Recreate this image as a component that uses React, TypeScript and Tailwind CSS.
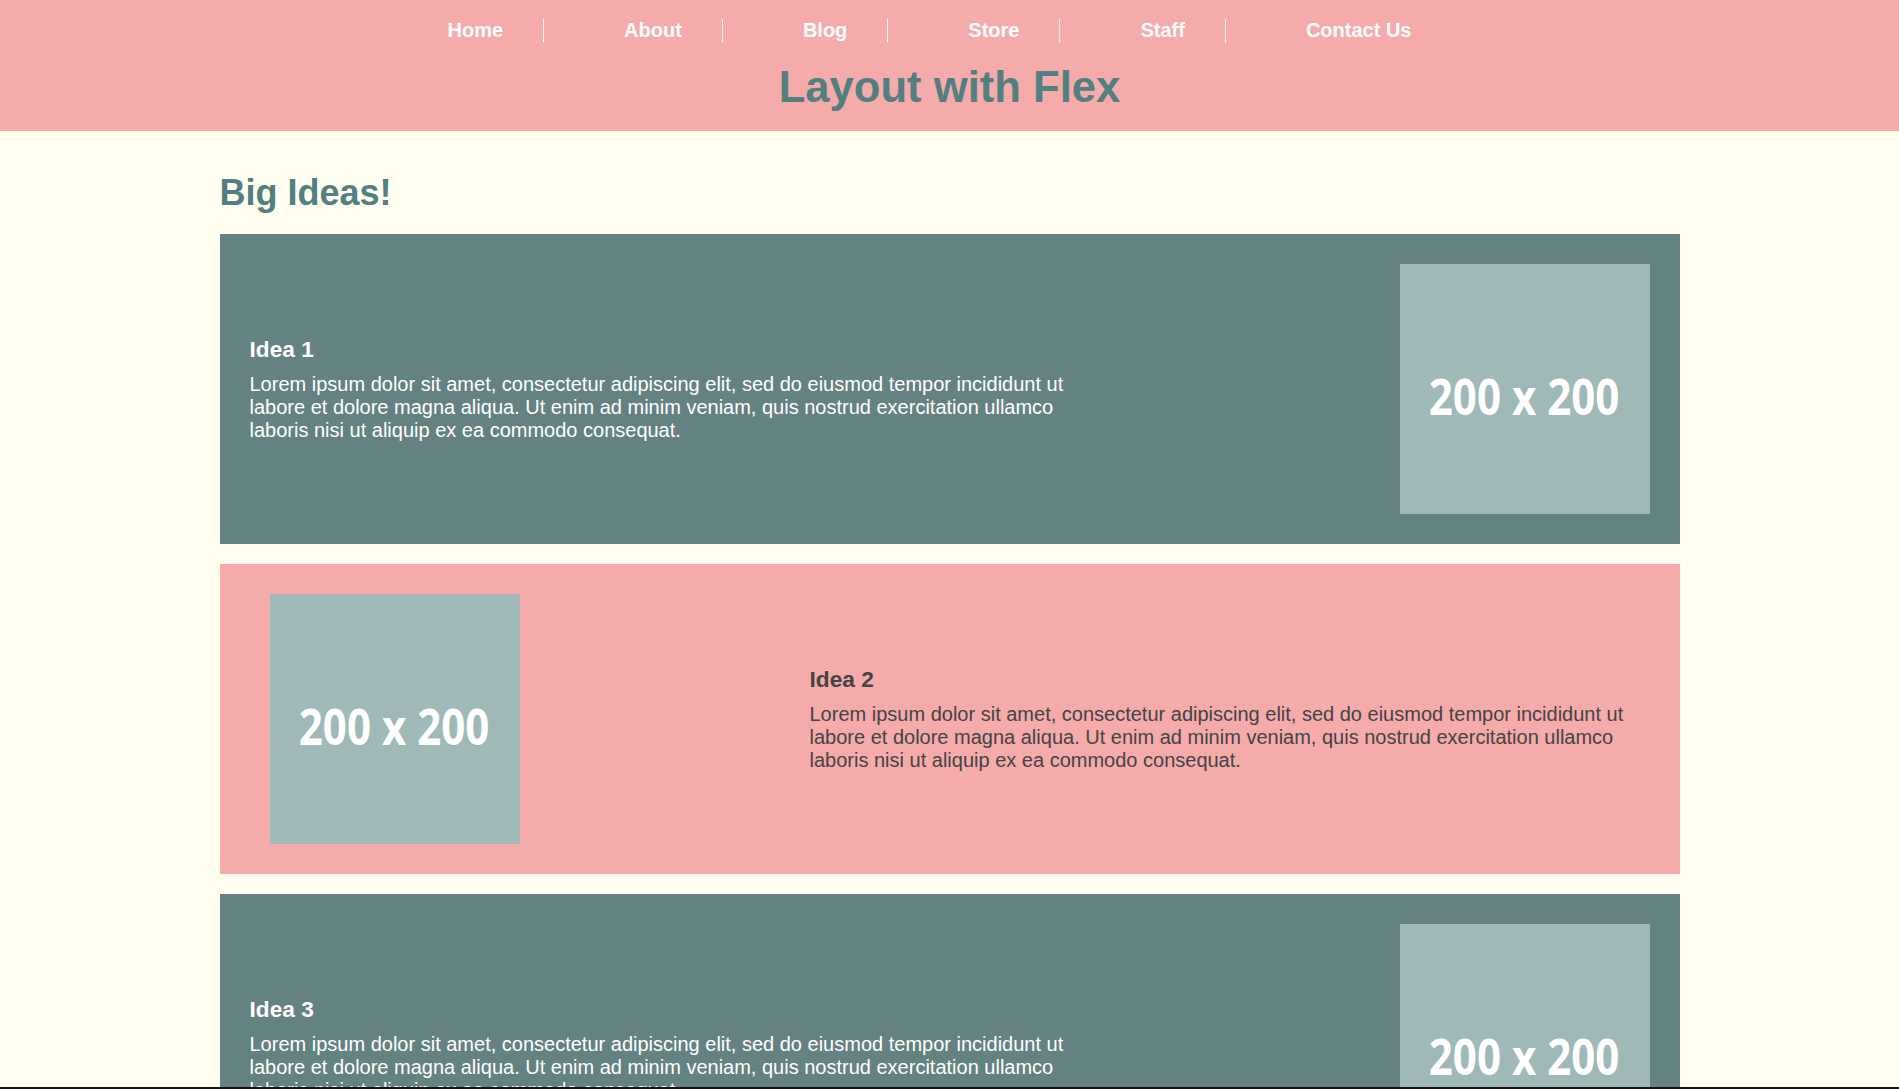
import React from 'react';

const navItems = ['Home', 'About', 'Blog', 'Store', 'Staff', 'Contact Us'];

const lorem =
  'Lorem ipsum dolor sit amet, consectetur adipiscing elit, sed do eiusmod tempor incididunt ut labore et dolore magna aliqua. Ut enim ad minim veniam, quis nostrud exercitation ullamco laboris nisi ut aliquip ex ea commodo consequat.';

const Placeholder: React.FC<{ className?: string }> = ({ className = '' }) => (
  <div className={`w-[250px] h-[250px] shrink-0 bg-[#9eb9b8] flex items-center justify-center ${className}`}>
    <span className="mt-4 inline-block scale-x-85 text-[49.5px] leading-none font-bold text-white font-['Open_Sans',sans-serif]">
      200 x 200
    </span>
  </div>
);

const IdeaText: React.FC<{ title: string; dark?: boolean }> = ({ title, dark }) => (
  <div className={`w-[840px] ${dark ? 'text-[#444444]' : 'text-white'}`}>
    <h3 className="text-[22.67px] leading-[26px] font-bold">{title}</h3>
    <p className="mt-[10.5px] text-[20px] leading-[23px]">{lorem}</p>
  </div>
);

const App: React.FC = () => {
  return (
    <div className="min-h-screen bg-[#fffef0] font-['Liberation_Sans',Arial,sans-serif]">
      {/* Header */}
      <header className="h-[131px] bg-[#f4abaa] flex flex-col items-center">
        <ul className="w-full flex justify-center pr-10 pt-[19px]">
          {navItems.map((item, i) => (
            <li
              key={item}
              className={`mx-5 px-10 text-[20px] leading-[23px] font-bold text-white ${
                i < navItems.length - 1 ? 'border-r border-white' : ''
              }`}
            >
              {item}
            </li>
          ))}
        </ul>
        <h1 className="mt-[20px] text-[43.6px] leading-[50px] font-bold text-[#527f7f]">Layout with Flex</h1>
      </header>

      {/* Content */}
      <main className="w-[1460px] mx-auto pt-[42px]">
        <h2 className="text-[36px] leading-[40px] font-bold text-[#527f7f]">Big Ideas!</h2>

        <div className="mt-[21px] flex flex-col gap-5 pb-10">
          <section className="bg-[#648282] p-[30px] flex items-center justify-between">
            <IdeaText title="Idea 1" />
            <Placeholder />
          </section>

          <section className="bg-[#f4abaa] p-[30px] flex items-center justify-between">
            <Placeholder className="ml-5" />
            <IdeaText title="Idea 2" dark />
          </section>

          <section className="bg-[#648282] p-[30px] flex items-center justify-between">
            <IdeaText title="Idea 3" />
            <Placeholder />
          </section>
        </div>
      </main>

      {/* window edge */}
      <div className="fixed inset-x-0 bottom-0 h-[2px] bg-[#151515]" />
    </div>
  );
};

export default App;
